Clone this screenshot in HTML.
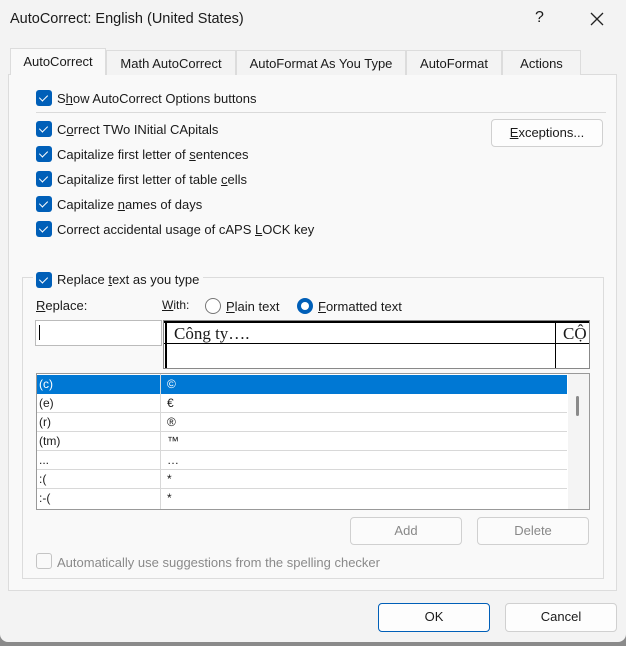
<!DOCTYPE html><html><head><meta charset="utf-8"><style>
*{box-sizing:border-box;margin:0;padding:0}
body{width:626px;height:646px;background:#8a8a8a;font-family:"Liberation Sans",sans-serif;font-size:13px;color:#1a1a1a;position:relative;overflow:hidden}
.a{position:absolute;white-space:nowrap}
#dlg{position:absolute;left:0;top:0;width:626px;height:642px;background:#f3f3f3;border-radius:0 0 8px 8px}
.cb{position:absolute;width:16px;height:16px;border-radius:3px;background:#005fb8}
.cb::after{content:"";position:absolute;left:5px;top:3px;width:4px;height:7px;border:solid #fff;border-width:0 1.5px 1.5px 0;transform:rotate(45deg)}
.btn{position:absolute;background:#fdfdfd;border:1px solid #d0d0d0;border-radius:4px;text-align:center;line-height:26px}
.tab{position:absolute;top:50px;height:25px;border:1px solid #dcdcdc;border-bottom:none;background:#f3f3f3;text-align:center;line-height:25px}
u{text-decoration:underline}
.row{position:absolute;left:37px;width:530px;height:19px;border-bottom:1px solid #d8d8d8;line-height:18px;font-size:12px}
.row span{position:absolute;left:2px}.row b{font-weight:normal;position:absolute;left:130px}
</style></head><body>
<div id="dlg">
<div class="a" style="left:10px;top:11px;font-size:14.5px">AutoCorrect: English (United States)</div>
<div class="a" style="left:535px;top:9px;font-size:16px">?</div>
<svg class="a" style="left:590px;top:12px" width="14" height="14"><path d="M1 1L13 13M13 1L1 13" stroke="#222" stroke-width="1.3"/></svg>
<div class="a" style="left:8px;top:74px;width:609px;height:517px;background:#f9f9f9;border:1px solid #dcdcdc"></div>
<div class="tab" style="left:10px;width:96px;top:48px;height:27px;background:#f9f9f9;border-color:#dcdcdc">AutoCorrect</div>
<div class="tab" style="left:106px;width:130px">Math AutoCorrect</div>
<div class="tab" style="left:236px;width:170px">AutoFormat As You Type</div>
<div class="tab" style="left:406px;width:96px">AutoFormat</div>
<div class="tab" style="left:502px;width:79px">Actions</div>

<div class="cb" style="left:36px;top:90px"></div><div class="a" style="left:57px;top:91px">S<u>h</u>ow AutoCorrect Options buttons</div>
<div class="a" style="left:36px;top:112px;width:570px;height:1px;background:#dadada"></div>
<div class="cb" style="left:36px;top:121px"></div><div class="a" style="left:57px;top:122px">C<u>o</u>rrect TWo INitial CApitals</div>
<div class="cb" style="left:36px;top:146px"></div><div class="a" style="left:57px;top:147px">Capitalize first letter of <u>s</u>entences</div>
<div class="cb" style="left:36px;top:171px"></div><div class="a" style="left:57px;top:172px">Capitalize first letter of table <u>c</u>ells</div>
<div class="cb" style="left:36px;top:196px"></div><div class="a" style="left:57px;top:197px">Capitalize <u>n</u>ames of days</div>
<div class="cb" style="left:36px;top:221px"></div><div class="a" style="left:57px;top:222px">Correct accidental usage of cAPS <u>L</u>OCK key</div>
<div class="btn" style="left:491px;top:119px;width:112px;height:28px"><u>E</u>xceptions...</div>

<div class="a" style="left:22px;top:277px;width:582px;height:302px;border:1px solid #dcdcdc"></div>
<div class="a" style="left:33px;top:270px;width:170px;height:16px;background:#f9f9f9"></div>
<div class="cb" style="left:36px;top:272px"></div><div class="a" style="left:57px;top:272px">Replace <u>t</u>ext as you type</div>
<div class="a" style="left:36px;top:298px"><u>R</u>eplace:</div>
<div class="a" style="left:162px;top:298px;font-size:12px"><u>W</u>ith:</div>
<div class="a" style="left:205px;top:298px;width:16px;height:16px;border:1px solid #777;border-radius:50%;background:#fff"></div>
<div class="a" style="left:226px;top:299px"><u>P</u>lain text</div>
<div class="a" style="left:297px;top:298px;width:16px;height:16px;border-radius:50%;background:#005fb8"><div style="position:absolute;left:4px;top:4px;width:8px;height:8px;border-radius:50%;background:#fff"></div></div>
<div class="a" style="left:318px;top:299px"><u>F</u>ormatted text</div>

<div class="a" style="left:35px;top:320px;width:127px;height:26px;background:#fff;border:1px solid #bbb"></div>
<div class="a" style="left:39px;top:325px;width:1px;height:15px;background:#000"></div>
<div class="a" style="left:163px;top:320px;width:427px;height:49px;background:#fff;border:1px solid #888;overflow:hidden">
<div class="a" style="left:0;top:0;width:427px;height:2px;background:#000"></div>
<div class="a" style="left:1px;top:0;width:2px;height:49px;background:#000"></div>
<div class="a" style="left:0;top:22px;width:427px;height:1px;background:#000"></div>
<div class="a" style="left:391px;top:0;width:1px;height:49px;background:#000"></div>
<div class="a" style="left:10px;top:3px;font-family:'Liberation Serif',serif;font-size:17px">Công ty….</div>
<div class="a" style="left:399px;top:3px;font-family:'Liberation Serif',serif;font-size:17px">CỘ</div>
</div>

<div class="a" style="left:36px;top:373px;width:554px;height:137px;background:#fff;border:1px solid #999;overflow:hidden"></div>
<div class="a" style="left:568px;top:374px;width:21px;height:135px;background:#f4f4f4"></div>
<div class="a" style="left:576px;top:396px;width:3px;height:20px;background:#8a8a8a;border-radius:2px"></div>
<div class="row" style="top:375px;background:#0078d4;color:#fff;border-color:#0078d4"><span>(c)</span><b>©</b></div>
<div class="row" style="top:394px"><span>(e)</span><b>€</b></div>
<div class="row" style="top:413px"><span>(r)</span><b>®</b></div>
<div class="row" style="top:432px"><span>(tm)</span><b>™</b></div>
<div class="row" style="top:451px"><span>...</span><b>…</b></div>
<div class="row" style="top:470px"><span>:(</span><b>*</b></div>
<div class="row" style="top:489px;border:none"><span>:-(</span><b>*</b></div>
<div class="a" style="left:160px;top:374px;width:1px;height:135px;background:#d8d8d8"></div>

<div class="btn" style="left:350px;top:517px;width:112px;height:28px;color:#888;background:#fbfbfb">Add</div>
<div class="btn" style="left:477px;top:517px;width:112px;height:28px;color:#888;background:#fbfbfb">Delete</div>
<div class="a" style="left:36px;top:553px;width:16px;height:16px;border:1px solid #c4c4c4;border-radius:3px"></div>
<div class="a" style="left:57px;top:555px;color:#8a8a8a">Automatically use suggestions from the spelling checker</div>

<div class="btn" style="left:378px;top:603px;width:112px;height:29px;border-color:#005fb8">OK</div>
<div class="btn" style="left:505px;top:603px;width:112px;height:29px">Cancel</div>
</div>
</body></html>
